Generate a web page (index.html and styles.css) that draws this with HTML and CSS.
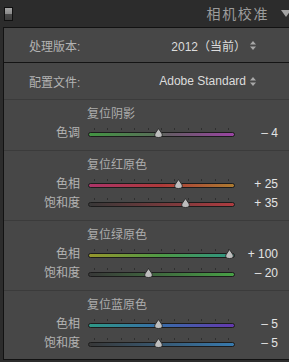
FILE: index.html
```html
<!DOCTYPE html>
<html lang="zh">
<head>
<meta charset="utf-8">
<link rel="stylesheet" href="styles.css">
</head>
<body>
<div class="header">
  <div class="toggle"></div>
  <div class="title">相机校准</div>
  <svg class="collapse" width="10" height="8" viewBox="0 0 10 8"><path d="M0 0 H10 L5 7 Z" fill="#a3a3a3"/></svg>
</div>
<div class="panel">
  <div class="prop prop-process">
    <span class="prop-label">处理版本:</span>
    <span class="prop-value">2012（当前）<svg class="updown" width="6" height="9" viewBox="0 0 6 9"><path d="M3 0 L6 3.5 H0 Z M3 9 L6 5.5 H0 Z" fill="#a8a8a8"/></svg></span>
  </div>
  <div class="prop prop-profile">
    <span class="prop-label">配置文件:</span>
    <span class="prop-value">Adobe Standard<svg class="updown" width="6" height="9" viewBox="0 0 6 9"><path d="M3 0 L6 3.5 H0 Z M3 9 L6 5.5 H0 Z" fill="#a8a8a8"/></svg></span>
  </div>

  <div class="section">
    <div class="section-title">复位阴影</div>
    <div class="slider-row">
      <span class="slider-label">色调</span>
      <div class="slider">
        <div class="ticks"><i></i><i></i><i></i><i></i><i></i><i></i><i></i><i></i><i></i><i></i><i></i></div>
        <div class="track g-tint"></div>
        <div class="thumb-range"><svg class="thumb" style="left:48%" width="9" height="10" viewBox="0 0 9 10"><path d="M4.5 0.5 L8.2 6 Q8.8 9.5 4.5 9.5 Q0.2 9.5 0.8 6 Z" fill="#bdbdbd" stroke="#2a2a2a" stroke-width="0.9"/></svg></div>
      </div>
      <span class="slider-value">– 4</span>
    </div>
  </div>

  <div class="section">
    <div class="section-title">复位红原色</div>
    <div class="slider-row">
      <span class="slider-label">色相</span>
      <div class="slider">
        <div class="ticks"><i></i><i></i><i></i><i></i><i></i><i></i><i></i><i></i><i></i><i></i><i></i></div>
        <div class="track g-red-hue"></div>
        <div class="thumb-range"><svg class="thumb" style="left:62.5%" width="9" height="10" viewBox="0 0 9 10"><path d="M4.5 0.5 L8.2 6 Q8.8 9.5 4.5 9.5 Q0.2 9.5 0.8 6 Z" fill="#bdbdbd" stroke="#2a2a2a" stroke-width="0.9"/></svg></div>
      </div>
      <span class="slider-value">+ 25</span>
    </div>
    <div class="slider-row">
      <span class="slider-label">饱和度</span>
      <div class="slider">
        <div class="ticks"><i></i><i></i><i></i><i></i><i></i><i></i><i></i><i></i><i></i><i></i><i></i></div>
        <div class="track g-red-sat"></div>
        <div class="thumb-range"><svg class="thumb" style="left:67.5%" width="9" height="10" viewBox="0 0 9 10"><path d="M4.5 0.5 L8.2 6 Q8.8 9.5 4.5 9.5 Q0.2 9.5 0.8 6 Z" fill="#bdbdbd" stroke="#2a2a2a" stroke-width="0.9"/></svg></div>
      </div>
      <span class="slider-value">+ 35</span>
    </div>
  </div>

  <div class="section">
    <div class="section-title">复位绿原色</div>
    <div class="slider-row">
      <span class="slider-label">色相</span>
      <div class="slider">
        <div class="ticks"><i></i><i></i><i></i><i></i><i></i><i></i><i></i><i></i><i></i><i></i><i></i></div>
        <div class="track g-green-hue"></div>
        <div class="thumb-range"><svg class="thumb" style="left:100%" width="9" height="10" viewBox="0 0 9 10"><path d="M4.5 0.5 L8.2 6 Q8.8 9.5 4.5 9.5 Q0.2 9.5 0.8 6 Z" fill="#bdbdbd" stroke="#2a2a2a" stroke-width="0.9"/></svg></div>
      </div>
      <span class="slider-value">+ 100</span>
    </div>
    <div class="slider-row">
      <span class="slider-label">饱和度</span>
      <div class="slider">
        <div class="ticks"><i></i><i></i><i></i><i></i><i></i><i></i><i></i><i></i><i></i><i></i><i></i></div>
        <div class="track g-green-sat"></div>
        <div class="thumb-range"><svg class="thumb" style="left:40%" width="9" height="10" viewBox="0 0 9 10"><path d="M4.5 0.5 L8.2 6 Q8.8 9.5 4.5 9.5 Q0.2 9.5 0.8 6 Z" fill="#bdbdbd" stroke="#2a2a2a" stroke-width="0.9"/></svg></div>
      </div>
      <span class="slider-value">– 20</span>
    </div>
  </div>

  <div class="section section-last">
    <div class="section-title">复位蓝原色</div>
    <div class="slider-row">
      <span class="slider-label">色相</span>
      <div class="slider">
        <div class="ticks"><i></i><i></i><i></i><i></i><i></i><i></i><i></i><i></i><i></i><i></i><i></i></div>
        <div class="track g-blue-hue"></div>
        <div class="thumb-range"><svg class="thumb" style="left:47.5%" width="9" height="10" viewBox="0 0 9 10"><path d="M4.5 0.5 L8.2 6 Q8.8 9.5 4.5 9.5 Q0.2 9.5 0.8 6 Z" fill="#bdbdbd" stroke="#2a2a2a" stroke-width="0.9"/></svg></div>
      </div>
      <span class="slider-value">– 5</span>
    </div>
    <div class="slider-row">
      <span class="slider-label">饱和度</span>
      <div class="slider">
        <div class="ticks"><i></i><i></i><i></i><i></i><i></i><i></i><i></i><i></i><i></i><i></i><i></i></div>
        <div class="track g-blue-sat"></div>
        <div class="thumb-range"><svg class="thumb" style="left:47.5%" width="9" height="10" viewBox="0 0 9 10"><path d="M4.5 0.5 L8.2 6 Q8.8 9.5 4.5 9.5 Q0.2 9.5 0.8 6 Z" fill="#bdbdbd" stroke="#2a2a2a" stroke-width="0.9"/></svg></div>
      </div>
      <span class="slider-value">– 5</span>
    </div>
  </div>
</div>
</body>
</html>
```

FILE: styles.css
```css
* { box-sizing: border-box; }

html, body {
  margin: 0;
  padding: 0;
  background: #2c2c2c;
  width: 289px;
  height: 362px;
  overflow: hidden;
  font-family: "Liberation Sans", "Noto Sans CJK SC", sans-serif;
  font-size: 12px;
}

.header {
  height: 27px;
  display: flex;
  align-items: center;
  padding-left: 4px;
}

.toggle {
  width: 9px;
  height: 14px;
  border: 1px solid #111;
  background: linear-gradient(to bottom, #a5a5a5 0%, #8a8a8a 50%, #4a4a4a 50%, #3e3e3e 100%);
}

.title {
  margin-left: auto;
  font-size: 14px;
  letter-spacing: 1.6px;
  color: #9c9c9c;
  margin-right: 12px;
  line-height: 27px;
  padding-top: 1px;
}

.collapse {
  flex: none;
  margin-right: -2px;
  margin-top: 1px;
}

.panel {
  margin-left: 3px;
  height: 333px;
  background: #474747;
  border-top: 1px solid #121212;
  border-left: 1px solid #121212;
  border-bottom: 1px solid #121212;
}

.prop {
  display: flex;
  align-items: center;
  justify-content: space-between;
  padding-left: 25px;
  padding-right: 33px;
}

.prop-process {
  height: 35px;
  border-bottom: 1px solid #141414;
}

.prop-profile {
  height: 37px;
  border-bottom: 1px solid #3b3b3b;
}

.prop-label {
  color: #b3b3b3;
}

.prop-value {
  display: flex;
  align-items: center;
  color: #dcdcdc;
}

.updown {
  margin-left: 4px;
}

.section {
  padding-top: 5px;
  padding-bottom: 7px;
  border-bottom: 1px solid #3b3b3b;
}

.section-last {
  border-bottom: none;
  padding-bottom: 0;
}

.section-title {
  height: 19px;
  line-height: 19px;
  padding-left: 83px;
  color: #acacac;
}

.slider-row {
  display: grid;
  grid-template-columns: 76px 147px 1fr;
  column-gap: 8px;
  height: 19px;
  align-items: center;
}

.slider-label {
  text-align: right;
  color: #b3b3b3;
  line-height: 19px;
}

.slider-value {
  text-align: right;
  padding-right: 11px;
  margin-left: -8px;
  color: #e4e4e4;
  line-height: 19px;
}

.slider {
  position: relative;
  height: 19px;
  padding-top: 4px;
}

.ticks {
  display: flex;
  justify-content: space-between;
  margin: 0 6px;
  height: 2px;
}

.ticks i {
  width: 1px;
  height: 2px;
  background: #2f2f2f;
}

.track {
  margin-top: 2px;
  height: 5px;
  border: 1px solid #1c1c1c;
  border-radius: 3px;
}

.thumb-range {
  position: absolute;
  left: 6px;
  right: 6px;
  top: 4px;
  height: 10px;
}

.thumb {
  position: absolute;
  top: 0;
  margin-left: -4.5px;
}

.g-tint { background: linear-gradient(to right, #429442, #587058 45%, #665c66 55%, #9a44a2); }
.g-red-hue { background: linear-gradient(to right, #ac3468, #ae3a3a 50%, #ac7a30); }
.g-red-sat { background: linear-gradient(to right, #383838, #ae3c40); }
.g-green-hue { background: linear-gradient(to right, #96962c, #4e9a46 50%, #2e9484); }
.g-green-sat { background: linear-gradient(to right, #383838, #48a046); }
.g-blue-hue { background: linear-gradient(to right, #2e9886, #386caa 50%, #6438ae); }
.g-blue-sat { background: linear-gradient(to right, #383838, #387aae); }
```
